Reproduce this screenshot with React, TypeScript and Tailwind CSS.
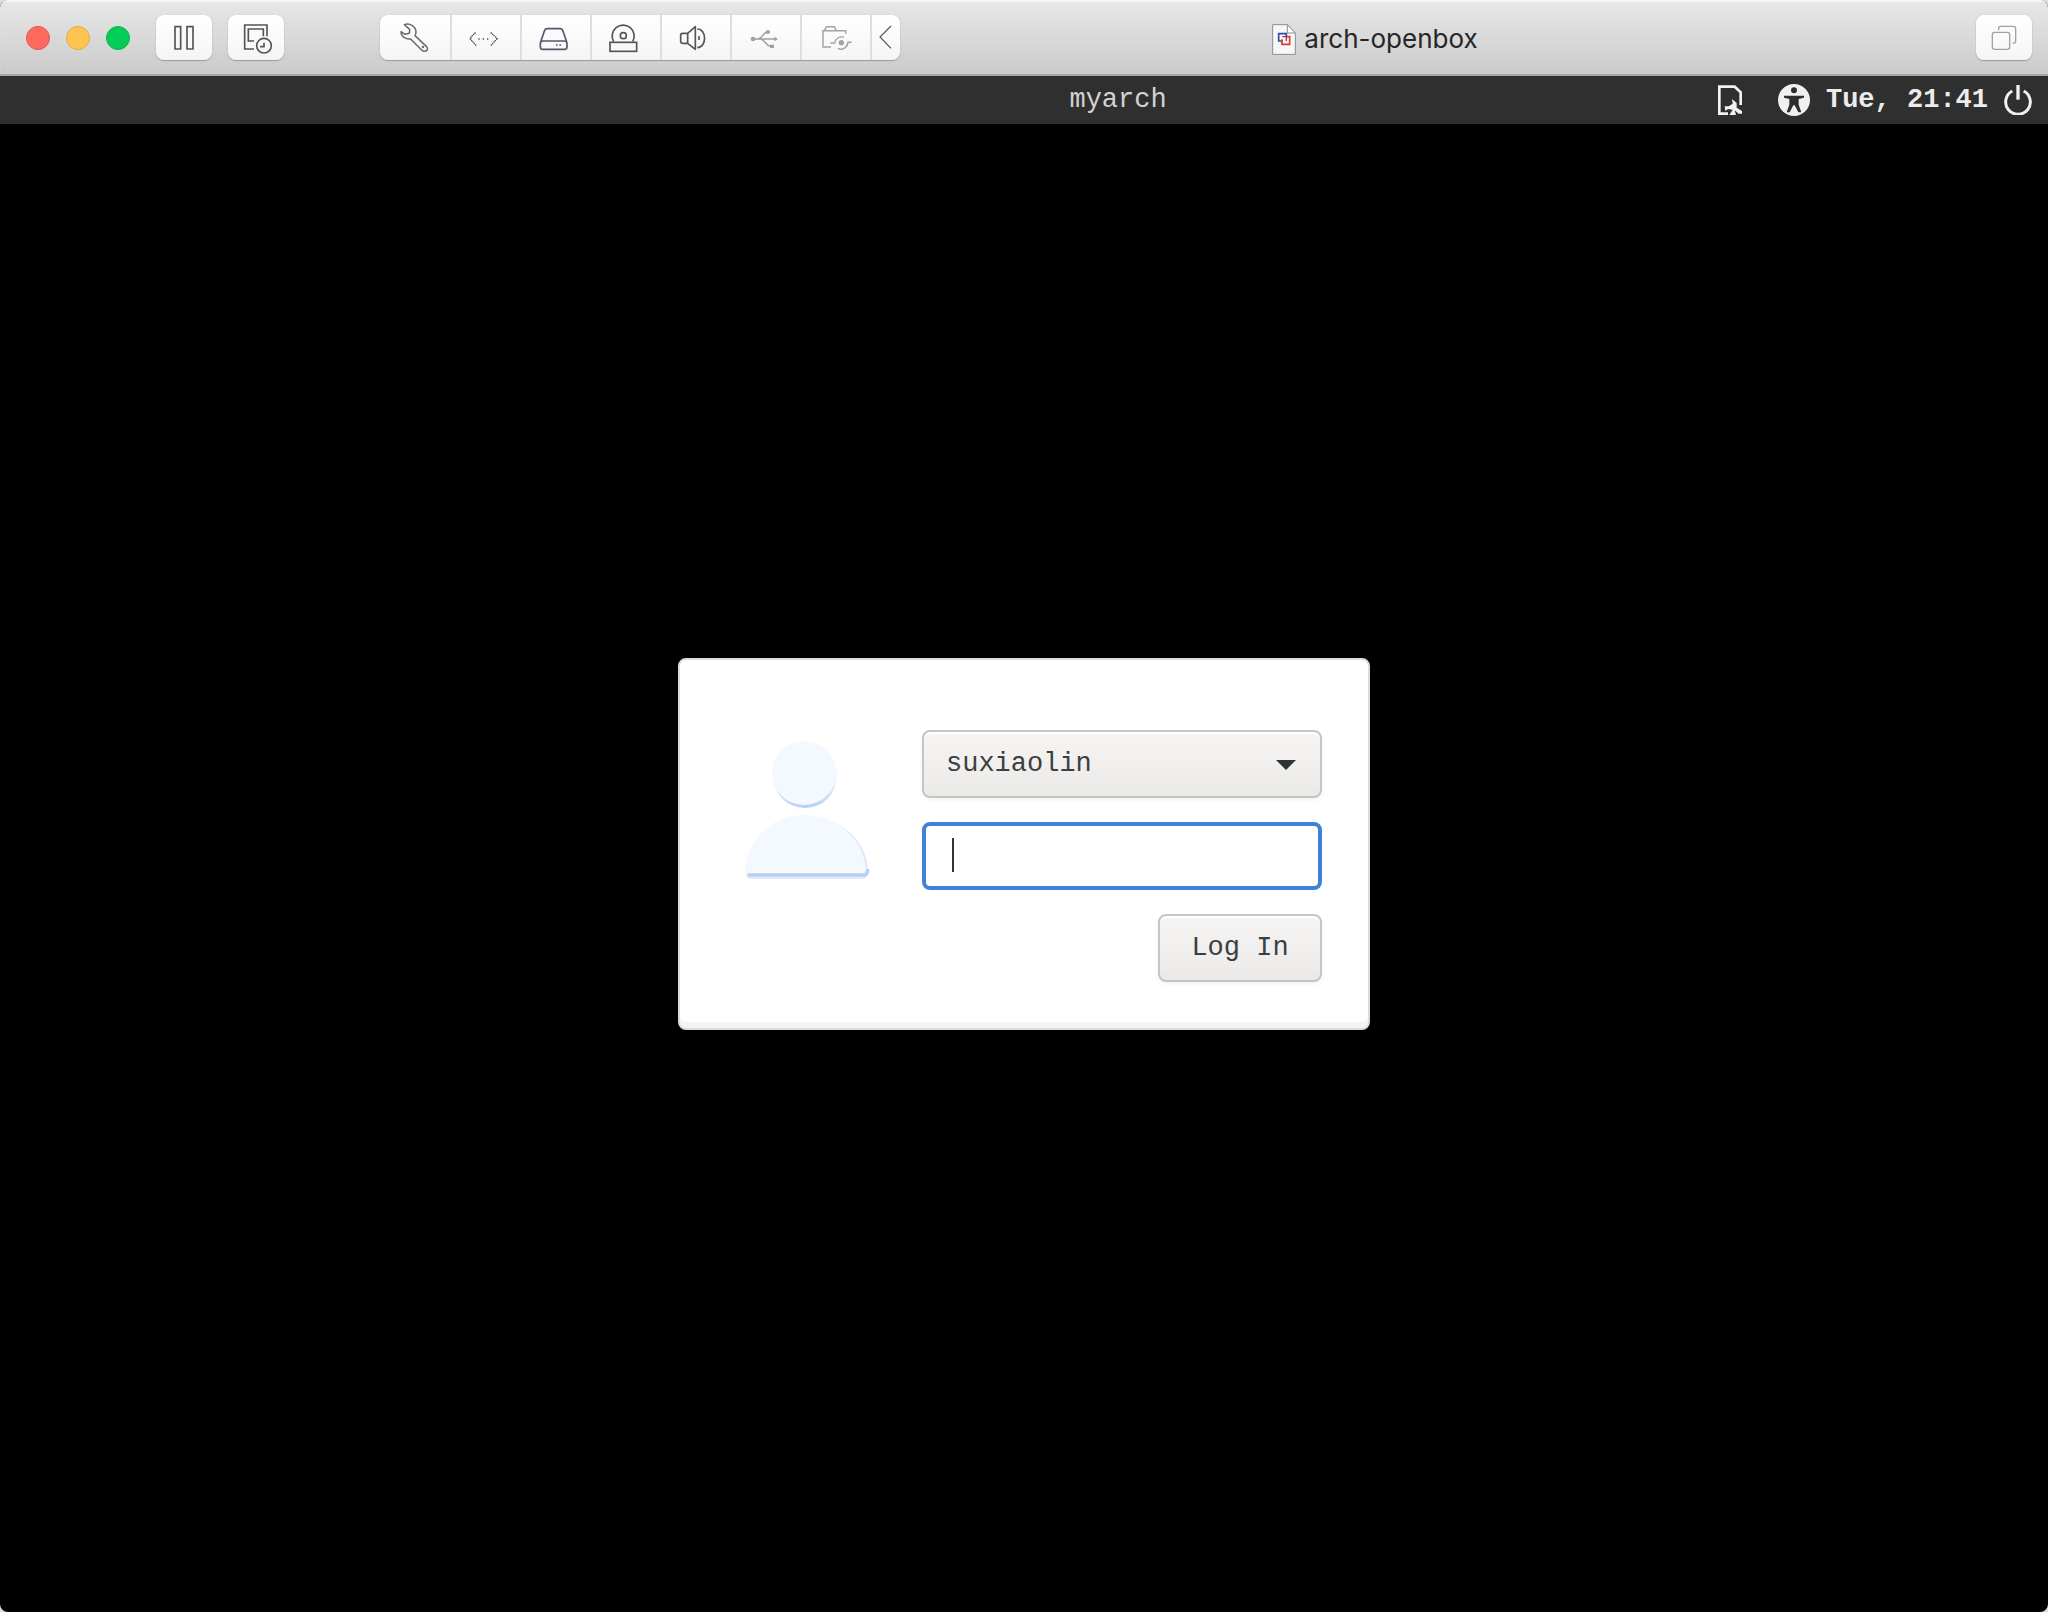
import React, { useState } from 'react';

const MONO = "font-['Liberation_Mono',monospace] text-[27px] leading-8";
const KEY = 'bg-linear-to-b from-white to-[#f5f5f5]';
const PAD = 'h-[45px] w-14 shrink-0 overflow-hidden rounded-lg shadow-[0_1px_1px_#9b9b9b,0_0_1px_#b0b0b0]';

type IconProps = { box: string; className: string; children: React.ReactNode };

function Icon({ box, className, children }: IconProps) {
  return (
    <svg viewBox={box} className={className} fill="none" aria-hidden="true">
      {children}
    </svg>
  );
}

const devices = [
  {
    name: 'Settings',
    art: (
      <g stroke="#6a6a6a" strokeWidth="4.5" strokeLinejoin="round">
        <path d="M73 29 C90 23 108 35 108 51 C108 56 107 59 105 62 L139 94 C145 101 143 109 134 109 C130 109 127 107 124 104 L92 72 C78 74 63 65 63 50 L75 58 L88 55 L89 43 Z" />
        <circle cx="129" cy="96" r="1.5" />
      </g>
    ),
  },
  {
    name: 'Network adapter',
    art: (
      <g fill="#505050">
        <path d="M67 52h4v4h-4zM63 56h4v4h-4zM59 60h4v4h-4zM55 64h4v4h-4zM53 69h5v5h-5zM57 75h4v4h-4zM61 79h4v4h-4zM65 84h4v4h-4zM69 88h4v4h-4zM116 52h4v4h-4zM120 56h4v4h-4zM124 60h4v4h-4zM129 64h4v4h-4zM132 69h5v5h-5zM128 75h4v4h-4zM124 79h4v4h-4zM120 84h4v4h-4zM116 88h4v4h-4zM79 70h4v4h-4zM92 70h4v4h-4zM105 70h4v4h-4z" />
      </g>
    ),
  },
  {
    name: 'Hard disk',
    art: (
      <g stroke="#55566a" strokeWidth="5" strokeLinejoin="round">
        <path d="M56 80 L68 46 Q70 41 76 41 H114 Q120 41 122 46 L134 80" />
        <rect x="55" y="78" width="80" height="25" rx="8" />
        <path d="M102 90h5M112 90h5" />
      </g>
    ),
  },
  {
    name: 'CD/DVD',
    art: (
      <g stroke="#555" strokeWidth="5">
        <path d="M65 80 A33 33 0 1 1 122 80" />
        <circle cx="94" cy="62" r="9" />
        <rect x="54" y="82" width="80" height="27" />
      </g>
    ),
  },
  {
    name: 'Sound card',
    art: (
      <g stroke="#555" strokeWidth="5" strokeLinejoin="round">
        <path d="M77 55 H62 Q56 55 56 61 V79 Q56 85 62 85 H77 L100 103 V35 Z M77 55 V85" />
        <path d="M106 42 C134 42 136 96 106 98" />
        <path d="M111 63v12" />
      </g>
    ),
  },
  {
    name: 'USB',
    art: (
      <g stroke="#a0a0a0" strokeWidth="4.5">
        <path d="M63 72 H130" />
        <path d="M78 72 C92 70 94 52 104 52 H110 M86 72 C98 74 104 93 112 93 H120" />
        <circle cx="63" cy="72" r="7" fill="#a0a0a0" stroke="none" />
        <circle cx="108" cy="51" r="6" fill="#a0a0a0" stroke="none" />
        <path d="M127 65 L138 72 L127 79Z M114 89h12v10h-12z" fill="#a0a0a0" stroke="none" />
      </g>
    ),
  },
  {
    name: 'Shared folders',
    art: (
      <g stroke="#a3a3a3" strokeWidth="4.5">
        <path d="M87 96 H63 V47 H131 V56 M68 46 L73 35 H97 L102 46" />
        <path d="M85 84 H98 C100 72 110 64 126 66 M149 82 H138 C135 99 120 107 108 100" />
        <circle cx="118" cy="83" r="8" fill="#a3a3a3" stroke="none" />
      </g>
    ),
  },
];

function TitleBar() {
  return (
    <header className="flex h-19 items-start border-b-2 border-[#a6a6a6] bg-linear-to-b from-[#e8e8e8] to-[#cbcbcb] pt-[15px] pr-4 shadow-[inset_0_2px_1px_#f6f6f6]">
      <div className="mt-[11px] ml-[26px] flex gap-4">
        <button aria-label="Close" className="size-6 rounded-full border border-[#e2554b] bg-[#ff6a5e]" />
        <button aria-label="Minimise" className="size-6 rounded-full border border-[#deaa45] bg-[#fdc550]" />
        <button aria-label="Zoom" className="size-6 rounded-full border border-[#0cb54b] bg-[#04cc58]" />
      </div>
      <div className="ml-[26px] flex gap-4">
        <button aria-label="Pause" className={`${PAD} ${KEY}`}>
          <Icon box="0 0 168 135" className="h-[45px] w-14">
            <path d="M57 35h17v67H57zM93 35h18v67H93z" stroke="#555" strokeWidth="5" />
          </Icon>
        </button>
        <button aria-label="Snapshots" className={`${PAD} ${KEY}`}>
          <Icon box="0 0 168 135" className="h-[45px] w-14">
            <g stroke="#555" strokeWidth="5">
              <path d="M78 102 H50 V30 H117 V64 M78 78 H61 V42 H106 V64" />
              <circle cx="108" cy="92" r="22" />
              <path d="M108 83v12h-12" />
            </g>
          </Icon>
        </button>
      </div>
      <div className="ml-24 flex h-[45px] shrink-0 overflow-hidden rounded-lg shadow-[0_1px_1px_#9b9b9b,0_0_1px_#b0b0b0]">
        {devices.map((d, i) => (
          <button
            key={d.name}
            aria-label={d.name}
            className={`flex shrink-0 border-r-2 border-[#dedede] ${KEY} ${i === 0 ? 'w-18' : 'w-[70px]'}`}
          >
            <Icon box="0 0 210 135" className="h-[45px] w-[70px] shrink-0">
              {d.art}
            </Icon>
          </button>
        ))}
        <button aria-label="Collapse" className={`w-7 ${KEY}`}>
          <Icon box="0 0 84 135" className="h-[45px] w-7">
            <path d="M57 33 L24 66 L57 100" stroke="#555" strokeWidth="3.5" />
          </Icon>
        </button>
      </div>
      <div className="mt-2 flex flex-1 items-center justify-center gap-2 pr-[126px]">
        <Icon box="0 0 72 93" className="h-[31px] w-6">
          <path d="M2 2 H46 L70 28 V91 H2 Z" fill="#f8f8f8" stroke="#8c8c8c" strokeWidth="3" />
          <path d="M46 2 V27 H70 Z" fill="#fff" stroke="#8c8c8c" strokeWidth="3" />
          <path d="M32 51H20V29H43V36" stroke="#334a9c" strokeWidth="5" />
          <path d="M43 38H53V61H30V46" stroke="#e2382c" strokeWidth="5" />
          <path d="M31 38H43V51" stroke="#8b3f66" strokeWidth="4" />
        </Icon>
        <h1 className="font-['Inter',sans-serif] text-[26px] leading-8 text-[#262626]">arch-openbox</h1>
      </div>
      <button aria-label="Full screen" className={`${PAD} ${KEY}`}>
        <Icon box="0 0 168 135" className="h-[45px] w-14">
          <g stroke="#a2a2a2" strokeWidth="4">
            <rect x="49" y="52" width="52" height="51" rx="7" />
            <path d="M68 46 V40 Q68 34 74 34 H112 Q119 34 119 41 V78 Q119 85 110 85" />
          </g>
        </Icon>
      </button>
    </header>
  );
}

function Panel() {
  return (
    <div className="flex h-12 items-center bg-[#2f2f2f] pr-4">
      <p className={`${MONO} flex-1 pl-[25.5%] text-center text-[#d2d2d2]`}>myarch</p>
      <button aria-label="Session" className="mr-9">
        <Icon box="0 0 72 93" className="h-[31px] w-6">
          <path d="M30 86 H4 V5 H50 L68 22 V60" stroke="#f2f2f2" strokeWidth="8" />
          <path d="M20 64 H32 L44 56 L42 42 L56 54 V68 L72 78 V86 H62 L50 76 L54 90 H34 L44 74 L30 72 L22 78Z" fill="#f2f2f2" />
        </Icon>
      </button>
      <button aria-label="Accessibility">
        <Icon box="0 0 96 96" className="size-8">
          <circle cx="48" cy="48" r="48" fill="#f0f0ee" />
          <circle cx="48" cy="19" r="9" fill="#2f2f2f" />
          <path d="M18 35 H78 V41 L62 45 V62 L70 85 H61 L50 64 H46 L35 85 H26 L34 62 V45 L18 41 Z" fill="#2f2f2f" />
        </Icon>
      </button>
      <time className={`${MONO} ml-4 font-bold text-[#ececec]`}>Tue, 21:41</time>
      <button aria-label="Power" className="ml-4">
        <Icon box="0 0 84 90" className="h-[30px] w-7">
          <path d="M25 18 A37 37 0 1 0 59 18" stroke="#f0f0ee" strokeWidth="9" />
          <path d="M42 0 V44" stroke="#f0f0ee" strokeWidth="10" />
        </Icon>
      </button>
    </div>
  );
}

function Avatar() {
  return (
    <svg viewBox="0 0 128 144" className="mt-2 h-36 w-32 shrink-0" role="img" aria-label="User">
      <defs>
        <linearGradient id="rim" x1="0" y1="0" x2="0" y2="1">
          <stop offset="0.55" stopColor="#f4f9ff" />
          <stop offset="1" stopColor="#b3d0f0" />
        </linearGradient>
      </defs>
      <circle cx="63" cy="38" r="32" fill="url(#rim)" />
      <circle cx="62" cy="35" r="32" fill="#f4f9ff" />
      <path d="M4 136 C4 100 32 78 62 78 C96 78 124 100 126 132 Q126 141 120 141 H10 Q4 141 4 136Z" fill="#dbe9fb" />
      <path d="M6 137 H122 Q126 137 126 131" fill="none" stroke="#b5cff0" strokeWidth="3" />
      <path d="M3 135 C4 99 32 77 62 77 C94 77 121 99 124 132 L121 135 Z" fill="#f4f9ff" />
    </svg>
  );
}

const FACE =
  'h-17 rounded-lg border-2 border-[#c6c5c2] bg-linear-to-b from-[#f6f5f4] to-[#ebeae9] text-[#3c3f40] shadow-[inset_0_2px_0_#fff,0_2px_4px_#0000000d]';

function Login() {
  const [password, setPassword] = useState('');
  return (
    <form
      className="flex gap-[52px] rounded-lg border-2 border-[#dcdcdc] bg-white pt-[70px] pr-[46px] pb-[46px] pl-[62px] shadow-[inset_0_-6px_0_#f5f5f5]"
      onSubmit={(e) => e.preventDefault()}
    >
      <Avatar />
      <div className="flex w-[400px] flex-col gap-6">
        <div className="relative">
          <select aria-label="User name" className={`${FACE} ${MONO} w-full appearance-none pl-[22px]`}>
            <option>suxiaolin</option>
          </select>
          <svg viewBox="0 0 20 10" className="pointer-events-none absolute top-[30px] right-[26px] h-2.5 w-5" aria-hidden="true">
            <path d="M0 0H20L10 10Z" fill="#2e3436" />
          </svg>
        </div>
        <div className="relative">
          <input
            type="password"
            aria-label="Password"
            value={password}
            onChange={(e) => setPassword(e.target.value)}
            className={`${MONO} h-17 w-full rounded-lg border-4 border-[#3f83d8] bg-white px-6 text-[#3c3f40] outline-none`}
          />
          {password === '' && <span className="pointer-events-none absolute top-4 left-[30px] h-[34px] w-0.5 bg-[#333]" />}
        </div>
        <button type="submit" className={`${FACE} ${MONO} w-[164px] self-end`}>
          Log In
        </button>
      </div>
    </form>
  );
}

export default function App() {
  return (
    <div className="min-h-screen bg-[#dedede]">
      <div className="flex min-h-screen flex-col overflow-hidden rounded-lg bg-black">
        <TitleBar />
        <Panel />
        <main className="flex flex-1 items-center justify-center pb-12">
          <Login />
        </main>
      </div>
    </div>
  );
}
